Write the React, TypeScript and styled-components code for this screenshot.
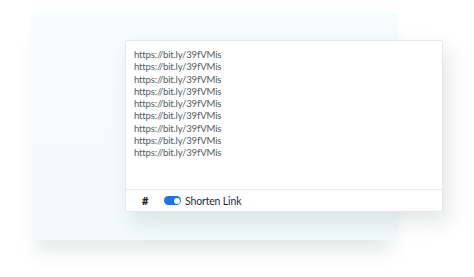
import React from "react";
import styled, { createGlobalStyle } from "styled-components";

const Global = createGlobalStyle`
  html, body { margin: 0; padding: 0; background: #ffffff; }
  body { font-family: Lato, "Open Sans", sans-serif; }
`;

const Stage = styled.div`
  width: 474px;
  height: 277px;
  position: relative;
  overflow: hidden;
  padding: 13px 0 0 31px;
  box-sizing: border-box;
`;

const BackCard = styled.div`
  width: 367px;
  height: 227px;
  background: linear-gradient(180deg, #f7fcfc 0%, #f2fafa 100%);
  border-radius: 3px;
  box-shadow: 0 18px 18px -6px rgba(60, 80, 80, 0.12);
`;

const FrontCard = styled.div`
  position: absolute;
  left: 125px;
  top: 40px;
  width: 318px;
  height: 172px;
  background: #ffffff;
  border: 1px solid #e4e8ea;
  border-radius: 2px;
  box-sizing: border-box;
  display: flex;
  flex-direction: column;
  box-shadow: 6px 10px 22px rgba(40, 60, 60, 0.12);
`;

const Links = styled.div`
  flex: 1;
  padding: 8px 0 0 8px;
  display: flex;
  flex-direction: column;
`;

const LinkLine = styled.div`
  font-size: 9.6px;
  line-height: 12.25px;
  color: #555b60;
  letter-spacing: -0.2px;
`;

const Footer = styled.div`
  height: 21px;
  border-top: 1px solid #e6e9eb;
  display: flex;
  align-items: center;
  padding-left: 16px;
`;

const Hash = styled.span`
  font-size: 11px;
  font-weight: 900;
  color: #222;
  width: 22px;
`;

const Toggle = styled.span`
  width: 17px;
  height: 9px;
  border-radius: 5px;
  background: #1a73e8;
  position: relative;
  margin-right: 4px;
  &::after {
    content: "";
    position: absolute;
    right: 1.5px;
    top: 1.5px;
    width: 6px;
    height: 6px;
    border-radius: 50%;
    background: #fff;
  }
`;

const Label = styled.span`
  font-size: 10.5px;
  color: #2a2d30;
  letter-spacing: -0.15px;
`;

export default function App() {
  const links = Array.from({ length: 9 }, () => "https://bit.ly/39fVMis");
  return (
    <>
      <Global />
      <Stage>
        <BackCard />
        <FrontCard>
          <Links>
            {links.map((l, i) => (
              <LinkLine key={i}>{l}</LinkLine>
            ))}
          </Links>
          <Footer>
            <Hash>#</Hash>
            <Toggle />
            <Label>Shorten Link</Label>
          </Footer>
        </FrontCard>
      </Stage>
    </>
  );
}
